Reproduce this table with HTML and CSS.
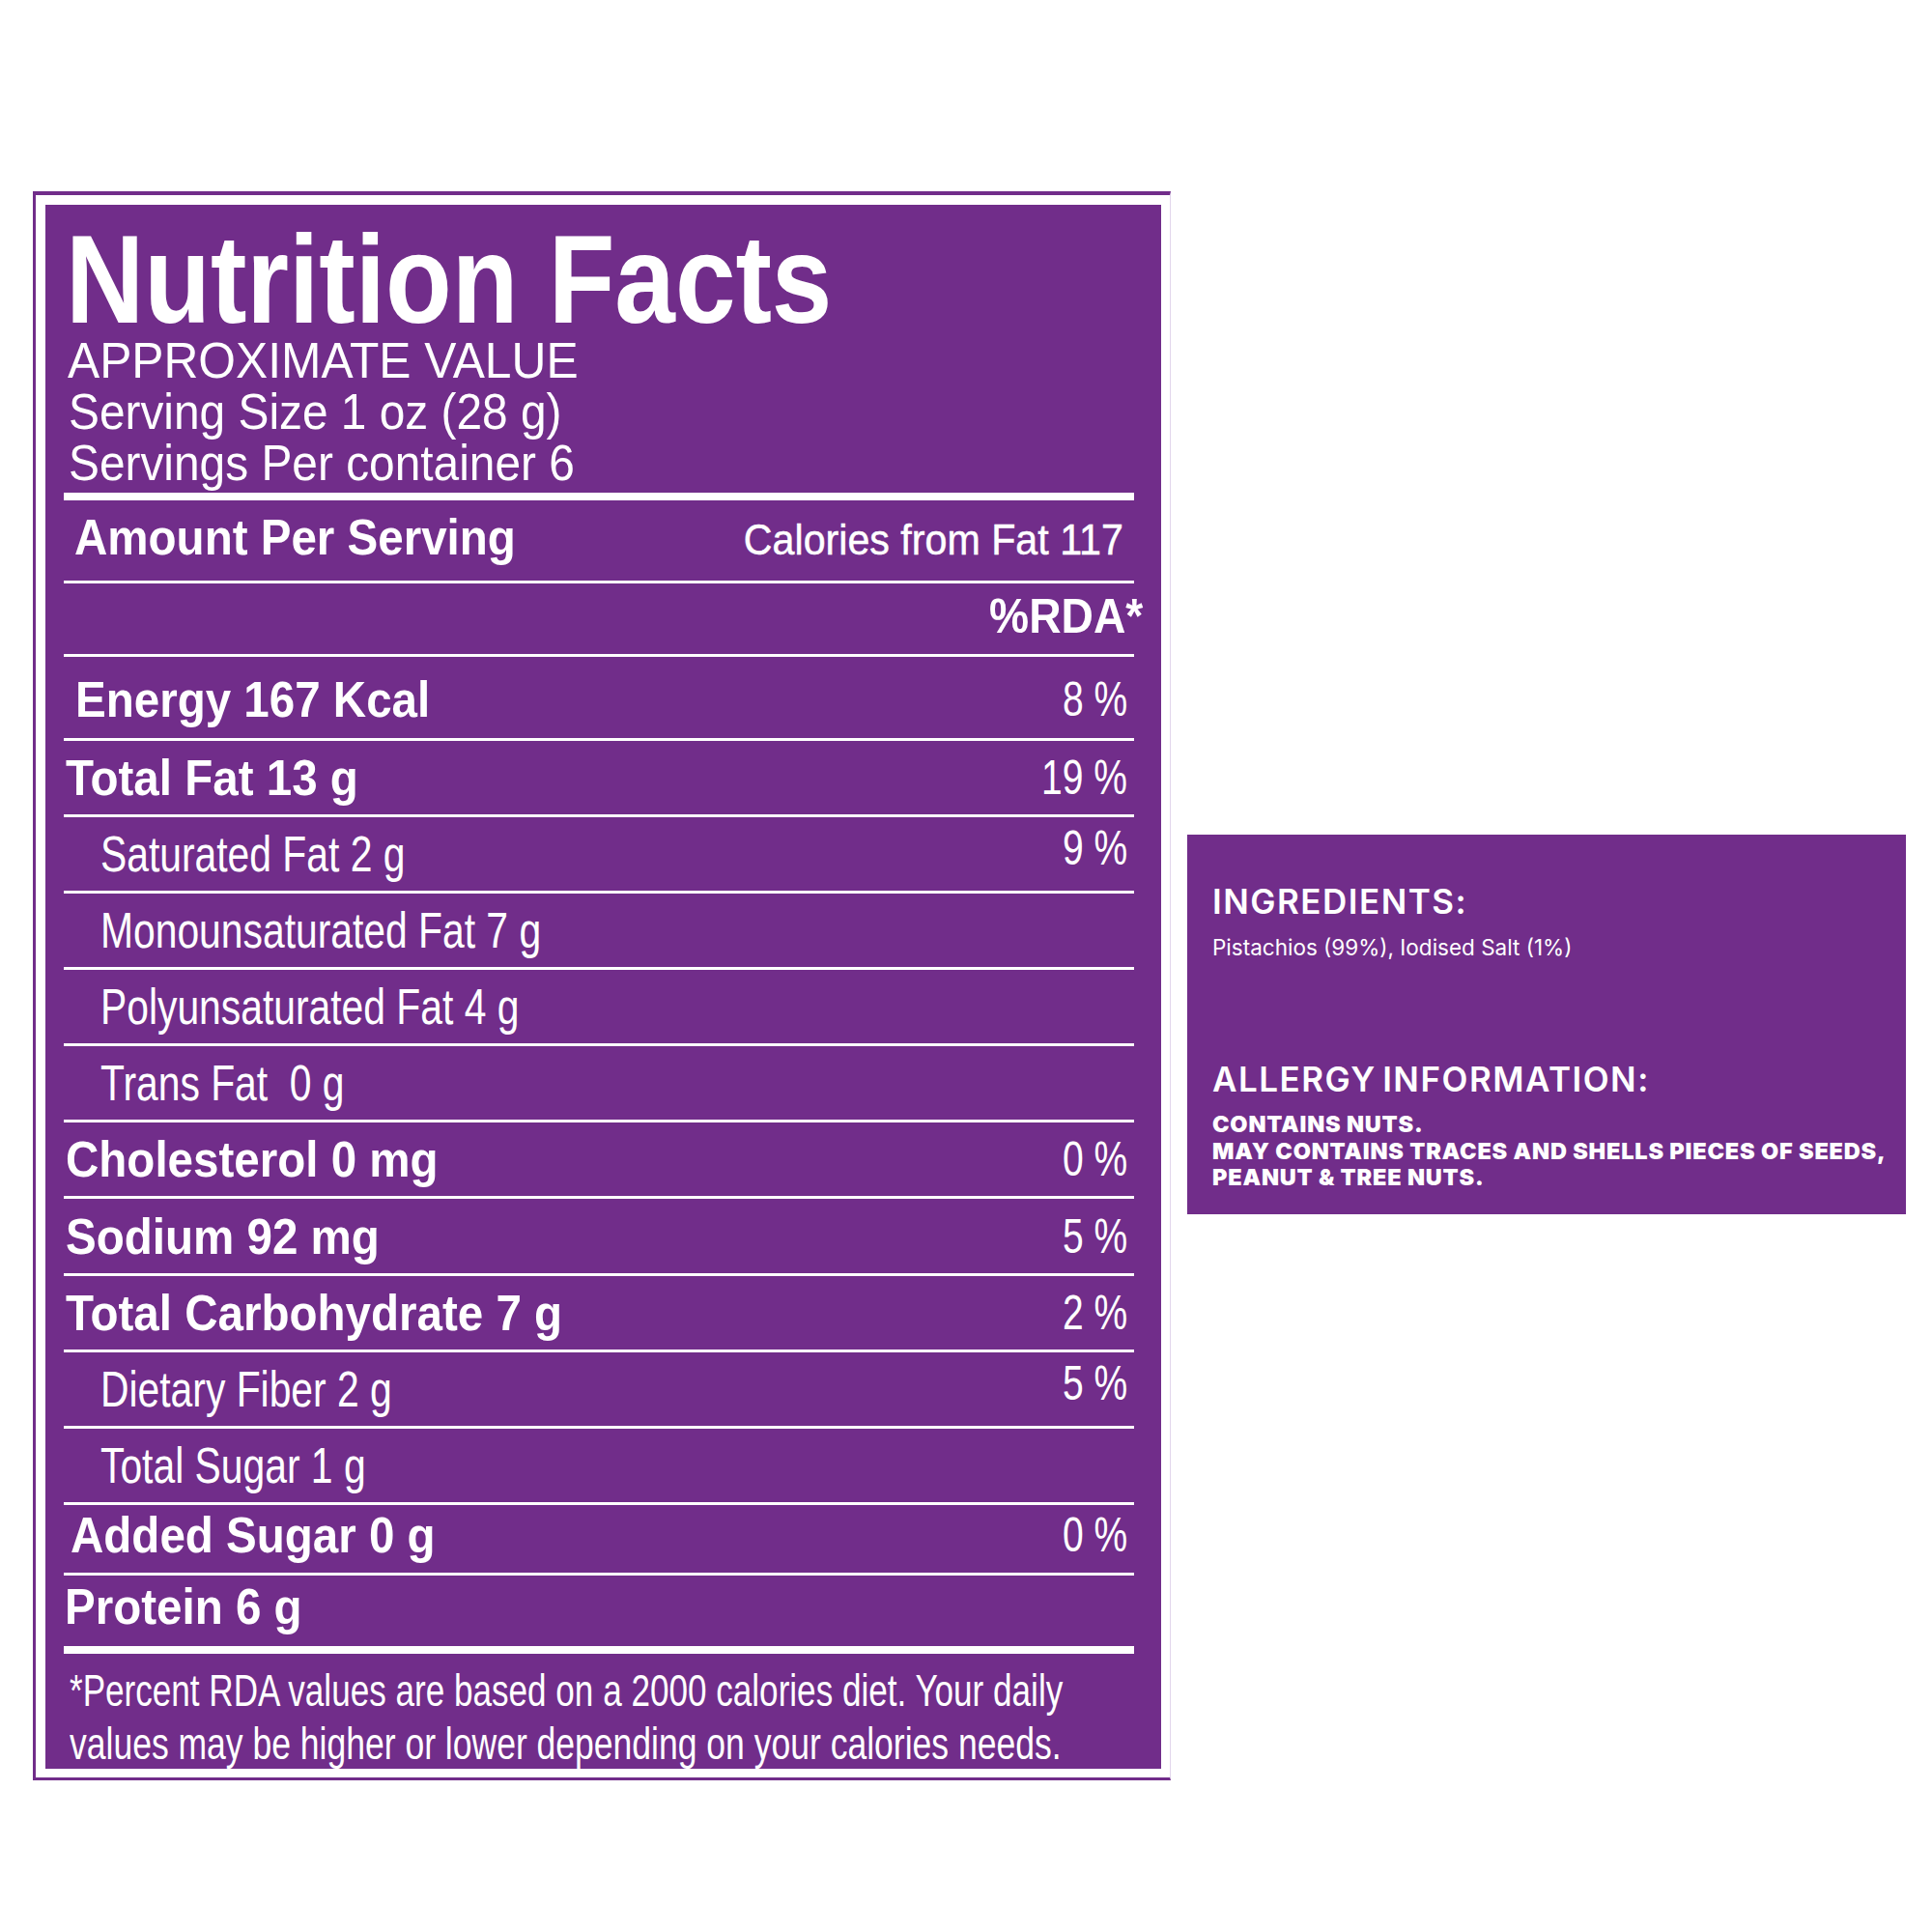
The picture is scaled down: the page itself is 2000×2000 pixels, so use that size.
FILE: index.html
```html
<!DOCTYPE html>
<html lang="en">
<head>
<meta charset="utf-8">
<title>Nutrition Facts</title>
<link rel="stylesheet" href="styles.css">
</head>
<body>
<div class="page">
  <section class="label">
    <div class="label-inner">
      <header class="head">
        <h1 class="title">Nutrition Facts</h1>
        <p class="approx">APPROXIMATE VALUE</p>
        <p class="serving">Serving Size 1 oz (28 g)</p>
        <p class="serving">Servings Per container 6</p>
      </header>
      <div class="rule-thick"></div>
      <div class="row row-amount">
        <span class="name bold">Amount Per Serving</span>
        <span class="cal">Calories from Fat 117</span>
      </div>
      <div class="row row-rda">
        <span class="name"></span>
        <span class="rda">%RDA*</span>
      </div>
      <div class="row row-energy">
        <span class="name bold">Energy 167 Kcal</span>
        <span class="pct">8 %</span>
      </div>
      <div class="row main">
        <span class="name bold">Total Fat 13 g</span>
        <span class="pct">19 %</span>
      </div>
      <div class="row sub">
        <span class="name narrow">Saturated Fat 2 g</span>
        <span class="pct pct-up">9 %</span>
      </div>
      <div class="row sub">
        <span class="name narrow">Monounsaturated Fat 7 g</span>
      </div>
      <div class="row sub">
        <span class="name narrow">Polyunsaturated Fat 4 g</span>
      </div>
      <div class="row sub">
        <span class="name narrow">Trans Fat&nbsp; 0 g</span>
      </div>
      <div class="row main">
        <span class="name bold">Cholesterol 0 mg</span>
        <span class="pct">0 %</span>
      </div>
      <div class="row main row-sodium">
        <span class="name bold">Sodium 92 mg</span>
        <span class="pct">5 %</span>
      </div>
      <div class="row main">
        <span class="name bold">Total Carbohydrate 7 g</span>
        <span class="pct">2 %</span>
      </div>
      <div class="row sub">
        <span class="name narrow">Dietary Fiber 2 g</span>
        <span class="pct pct-up">5 %</span>
      </div>
      <div class="row sub">
        <span class="name narrow">Total Sugar 1 g</span>
      </div>
      <div class="row main row-added">
        <span class="name bold">Added Sugar 0 g</span>
        <span class="pct">0 %</span>
      </div>
      <div class="row main row-protein">
        <span class="name bold">Protein 6 g</span>
      </div>
      <div class="rule-thick"></div>
      <p class="footnote">
        <span class="foot-line foot-1">*Percent RDA values are based on a 2000 calories diet. Your daily</span>
        <span class="foot-line foot-2">values may be higher or lower depending on your calories needs.</span>
      </p>
    </div>
  </section>

  <aside class="info">
    <h2 class="info-title">INGREDIENTS:</h2>
    <p class="info-text">Pistachios (99%), Iodised Salt (1%)</p>
    <h2 class="info-title allergy-title">ALLERGY INFORMATION:</h2>
    <p class="allergy-text">CONTAINS NUTS.<br>MAY CONTAINS TRACES AND SHELLS PIECES OF SEEDS,<br>PEANUT &amp; TREE NUTS.</p>
  </aside>
</div>
</body>
</html>
```

FILE: styles.css
```css
html, body {
  margin: 0;
  padding: 0;
  background: #ffffff;
}

.page {
  display: flex;
  align-items: flex-start;
  padding: 198px 0 0 34px;
}

/* ---------- Nutrition label ---------- */
.label {
  width: 1178px;
  box-sizing: border-box;
  border-top: 4px solid #712d8a;
  border-left: 3px solid #712d8a;
  border-bottom: 3px solid #712d8a;
  border-right: 1px solid #e2d5ec;
  padding: 10px 9px 9px 10px;
  background: #ffffff;
  font-family: "Liberation Sans", Arial, sans-serif;
  color: #ffffff;
}

.label-inner {
  background: #712d8a;
  height: 1619px;
  box-sizing: border-box;
  padding: 17px 28px 0 19px;
}

.title {
  margin: 0 0 0 2px;
  font-size: 130px;
  line-height: 120px;
  font-weight: 700;
  white-space: nowrap;
  transform: scaleX(0.865);
  transform-origin: left center;
}

.approx,
.serving {
  margin: 0 0 0 5px;
  font-size: 52px;
  line-height: 53px;
  font-weight: 400;
  white-space: nowrap;
  transform: scaleX(0.92);
  transform-origin: left center;
}

.approx {
  margin-top: -2px;
  margin-left: 4px;
  transform: scaleX(0.956);
}

.rule-thick {
  height: 8px;
  background: #ffffff;
  margin-top: 4px;
}

.row {
  display: flex;
  justify-content: space-between;
  align-items: flex-end;
  height: 79px;
  box-sizing: border-box;
  border-bottom: 3px solid #ffffff;
  padding-bottom: 12px;
  padding-right: 7px;
}

.name {
  white-space: nowrap;
  transform-origin: left center;
}

.bold {
  font-size: 52px;
  line-height: 52px;
  font-weight: 700;
  transform: scaleX(0.914);
}

.narrow {
  font-size: 52px;
  line-height: 52px;
  font-weight: 400;
  transform: scaleX(0.785);
}

.pct {
  font-size: 50px;
  line-height: 52px;
  white-space: nowrap;
  transform: scaleX(0.78);
  transform-origin: right center;
}

.pct-up {
  margin-bottom: 6px;
}

.main {
  padding-left: 2px;
}

.sub {
  padding-left: 38px;
}

.row-amount {
  height: 86px;
  padding-left: 11px;
  padding-bottom: 19px;
}

.cal {
  font-size: 44px;
  line-height: 46px;
  -webkit-text-stroke: 0.5px #ffffff;
  white-space: nowrap;
  margin-right: 4px;
  transform: scaleX(0.936);
  transform-origin: right center;
}

.row-rda {
  height: 76px;
  padding-bottom: 14px;
}

.rda {
  font-size: 50px;
  line-height: 50px;
  font-weight: 700;
  white-space: nowrap;
  margin-right: -16px;
  transform: scaleX(0.924);
  transform-origin: right center;
}

.row-energy {
  height: 87px;
  padding-left: 12px;
  padding-bottom: 14px;
}

.row-sodium {
  height: 80px;
}

.row-added {
  height: 73px;
  padding-left: 7px;
  padding-bottom: 13px;
}

.row-protein {
  height: 69px;
  border-bottom: none;
  padding-bottom: 11px;
}

.row-protein .bold {
  margin-left: -1px;
}

.footnote {
  margin: 11px 0 0 6px;
  font-size: 46px;
  line-height: 55px;
}

.foot-line {
  display: block;
  white-space: nowrap;
  transform-origin: left center;
}

.foot-1 {
  transform: scaleX(0.763);
}

.foot-2 {
  transform: scaleX(0.772);
}

/* ---------- Ingredients panel ---------- */
.info {
  margin: 666px 0 0 17px;
  width: 744px;
  height: 393px;
  box-sizing: border-box;
  background: #712d8a;
  color: #ffffff;
  padding: 49px 20px 0 26px;
  font-family: Inter, "Noto Sans", sans-serif;
}

.info-title {
  margin: 0;
  font-size: 35px;
  line-height: 40px;
  font-weight: 600;
  letter-spacing: 1.5px;
  word-spacing: -4px;
  white-space: nowrap;
}

.info-text {
  margin: 14px 0 0;
  font-size: 22.5px;
  line-height: 28px;
  font-weight: 400;
  white-space: nowrap;
}

.allergy-title {
  margin-top: 102px;
}

.allergy-text {
  margin: 13px 0 0;
  font-size: 23.5px;
  line-height: 27.5px;
  font-weight: 900;
  letter-spacing: 0.8px;
  white-space: nowrap;
}
```
